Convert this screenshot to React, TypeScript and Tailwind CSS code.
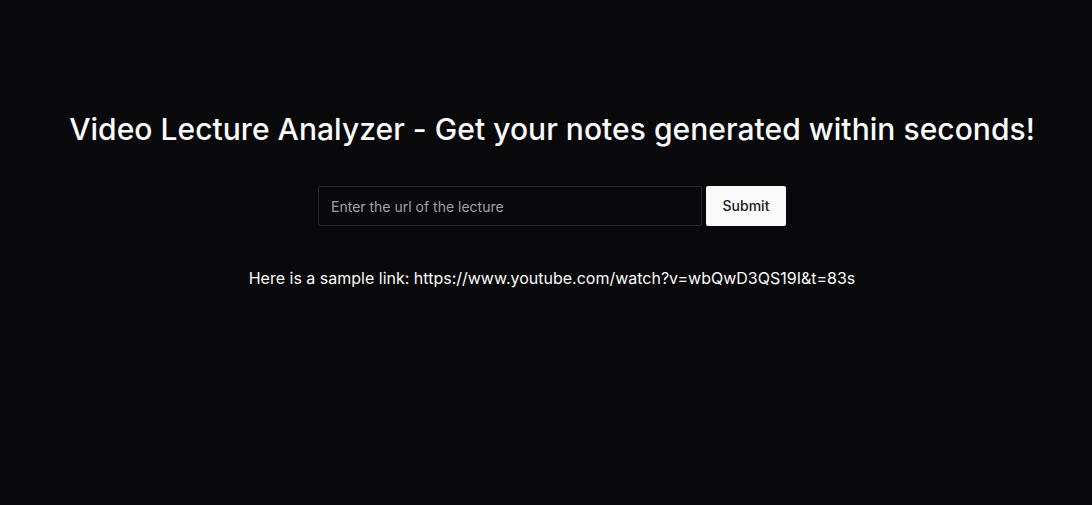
export default function App() {
  return (
    <div
      className="min-h-screen bg-[#09090b] pl-3 text-[#fafafa]"
      style={{ fontFamily: "Inter, 'Noto Sans', sans-serif" }}
    >
      <div className="flex flex-col items-center pt-[111px]">
        <h1 className="text-[30px] leading-9 font-medium tracking-[0.04px]">
          Video Lecture Analyzer - Get your notes generated within seconds!
        </h1>
        <form className="mt-[39px] flex items-center gap-1" onSubmit={(e) => e.preventDefault()}>
          <input
            type="text"
            placeholder="Enter the url of the lecture"
            className="h-10 w-96 rounded-[2px] border border-[#27272a] bg-transparent px-3 text-sm text-[#fafafa] placeholder:text-[#a1a1aa] outline-none"
          />
          <button
            type="submit"
            className="h-10 w-20 rounded-[2px] bg-[#fafafa] text-sm font-medium text-[#18181b]"
          >
            Submit
          </button>
        </form>
        <p className="mt-10 text-base leading-6">
          Here is a sample link: https://www.youtube.com/watch?v=wbQwD3QS19I&amp;t=83s
        </p>
      </div>
    </div>
  );
}
